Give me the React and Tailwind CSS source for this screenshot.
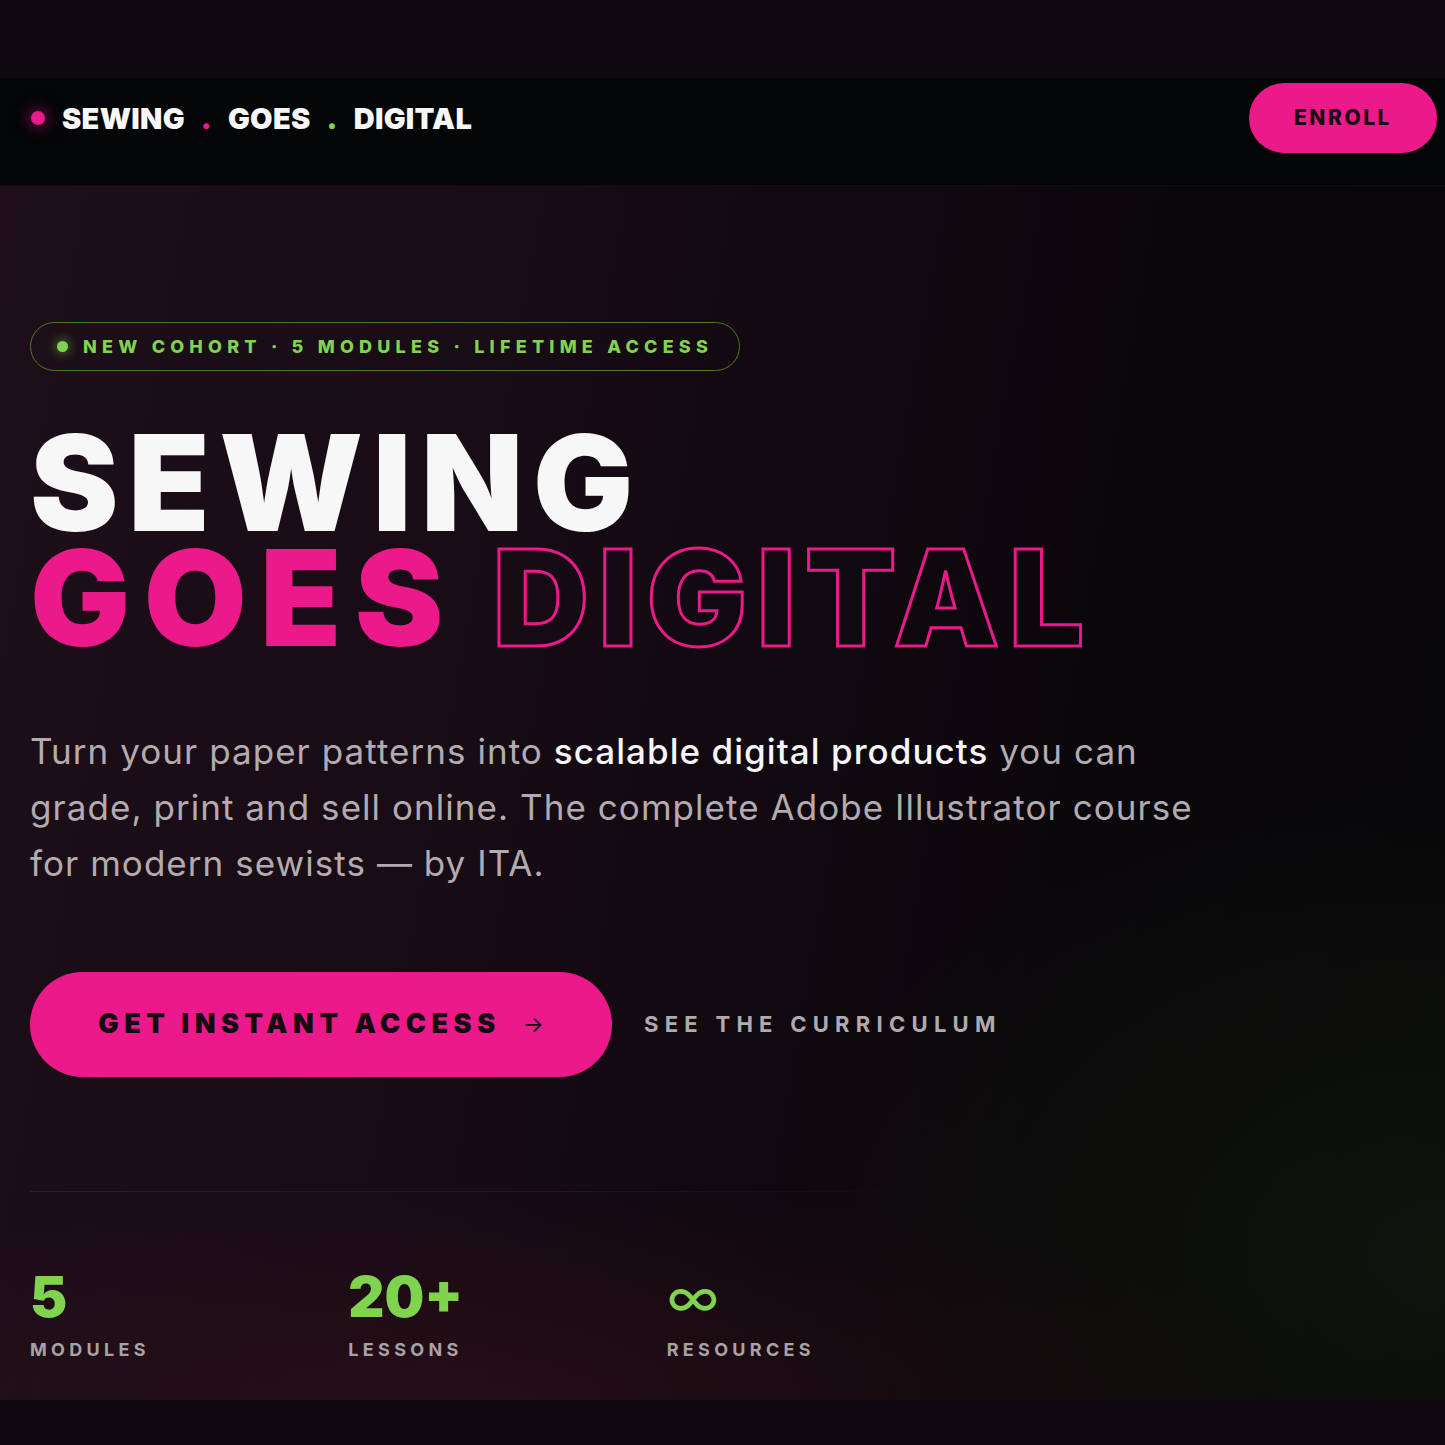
export default function App() {
  const head = { fontFamily: 'Inter, "Liberation Sans", sans-serif' };
  const body = { fontFamily: 'Inter, "Liberation Sans", sans-serif' };
  return (
    <div className="w-[1445px] min-h-[1445px] bg-[#0c080d]" style={body}>
      <div className="h-[78px] bg-[#0c080d]" />
      <nav className="h-[108px] bg-[#040507] border-b border-[#120c11] flex items-start justify-between pl-[31px] pr-[8px] pt-[5px]">
        <div className="h-[70px] flex items-center gap-[17px]">
          <span className="w-[14px] h-[14px] rounded-full bg-[#ec198b] shadow-[0_0_14px_4px_rgba(236,25,139,0.35)]" />
          <span className="text-[29px] font-black text-[#f7f7f8] tracking-[0.01em] leading-none" style={head}>
            SEWING<span className="text-[#ec198b] mx-[16px]">.</span>GOES<span className="text-[#7fd34e] mx-[16px]">.</span>DIGITAL
          </span>
        </div>
        <button className="h-[70px] w-[188px] rounded-full bg-[#ec198b] text-[#1a0a14] text-[21px] font-extrabold tracking-[0.12em] flex items-center justify-center">
          ENROLL
        </button>
      </nav>
      <section className="h-[1214px] px-[30px] pt-[136px] bg-[radial-gradient(ellipse_55%_18%_at_35%_100%,rgba(70,20,32,0.35),transparent),radial-gradient(ellipse_45%_40%_at_100%_88%,rgba(45,75,20,0.2),transparent),linear-gradient(100deg,#1e0f19_0%,#170b14_35%,#0a070b_72%,#070609_100%)]">
        <div className="inline-flex items-center h-[49px] rounded-full border border-[#4b7a2c] pl-[26px] pr-[26px] gap-[15px]">
          <span className="w-[11px] h-[11px] rounded-full bg-[#7fd34e] shadow-[0_0_10px_3px_rgba(127,211,78,0.35)]" />
          <span className="text-[18px] font-extrabold tracking-[0.29em] text-[#7fd34e] leading-none">
            NEW COHORT · 5 MODULES · LIFETIME ACCESS
          </span>
        </div>
        <h1 className="mt-[54px] text-[133px] font-black leading-[115px] tracking-[0.072em]" style={head}>
          <div className="text-[#f7f7f8]">SEWING</div>
          <div>
            <span className="text-[#ec198b] tracking-[0.1em]">GOES</span>{' '}
            <span className="text-transparent [-webkit-text-stroke:3px_#ec198b]">DIGITAL</span>
          </div>
        </h1>
        <p className="mt-[68px] max-w-[1170px] text-[35px] leading-[56px] tracking-[0.03em] text-[#b3abb1]">
          Turn your paper patterns into <span className="text-[#f7f5f7] font-medium">scalable digital products</span> you can grade, print and sell online. The complete Adobe Illustrator course for modern sewists — by ITA.
        </p>
        <div className="mt-[81px] flex items-center gap-[32px]">
          <button className="h-[105px] w-[582px] rounded-full bg-[#ec198b] text-[#140a11] text-[27px] font-black tracking-[0.205em] flex items-center justify-center gap-[22px]">
            <span>GET INSTANT ACCESS</span><span className="font-normal text-[22px] tracking-normal">→</span>
          </button>
          <span className="text-[22px] font-bold tracking-[0.285em] text-[#b0aab0]">SEE THE CURRICULUM</span>
        </div>
        <div className="mt-[114px] h-px w-[905px] bg-gradient-to-r from-[#2a2128] via-[#221a21] to-transparent" />
        <div className="mt-[77px] grid grid-cols-3 w-[955px]">
          {[
            ['5', 'MODULES', 'font-black'],
            ['20+', 'LESSONS', 'font-black'],
            ['∞', 'RESOURCES', 'font-normal'],
          ].map(([n, l, w]) => (
            <div key={l} className="flex flex-col">
              <span className={'h-[56px] flex items-center text-[56px] text-[#7fd34e] leading-none ' + w} style={head}>{n}</span>
              <span className="mt-[11px] text-[18px] font-bold tracking-[0.24em] text-[#a9a1a8]">{l}</span>
            </div>
          ))}
        </div>
      </section>
      <div className="h-[45px] bg-[#0c080d]" />
    </div>
  );
}
